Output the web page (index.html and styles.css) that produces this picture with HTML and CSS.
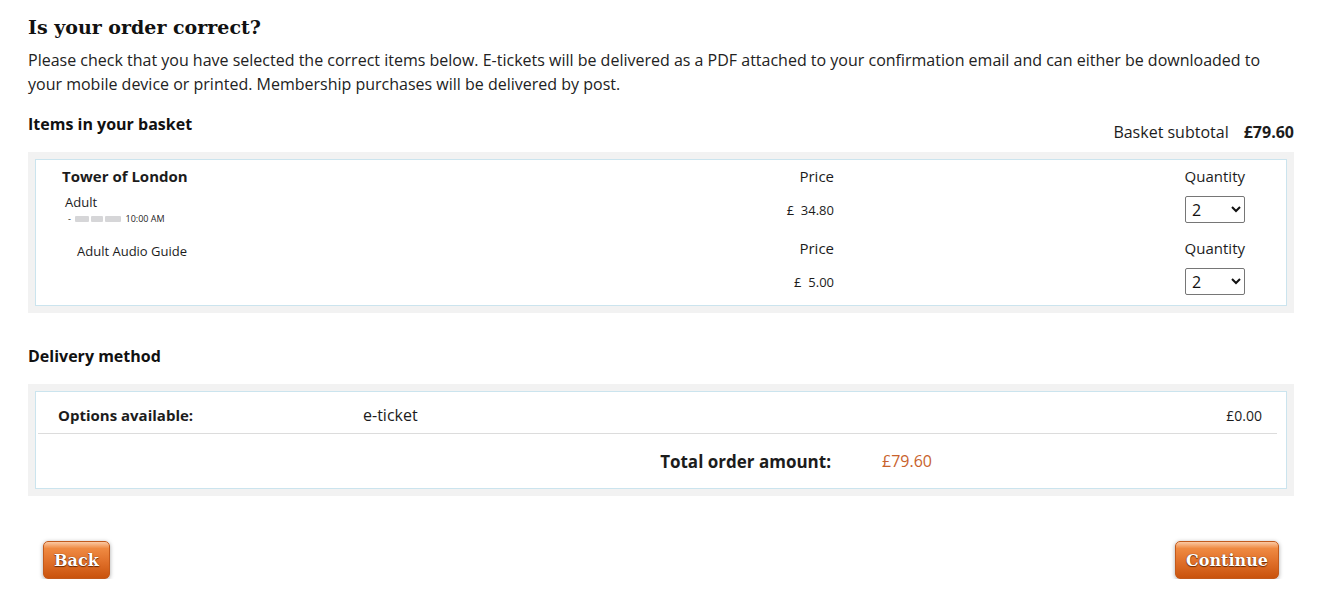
FILE: index.html
```html
<!DOCTYPE html>
<html lang="en">
<head>
<meta charset="utf-8">
<title>Is your order correct?</title>
<link rel="stylesheet" href="styles.css">
</head>
<body>
<div class="page">
  <h1 class="title">Is your order correct?</h1>
  <p class="intro">Please check that you have selected the correct items below. E-tickets will be delivered as a PDF attached to your confirmation email and can either be downloaded to your mobile device or printed. Membership purchases will be delivered by post.</p>

  <div class="basket-head">
    <h2 class="section-title">Items in your basket</h2>
    <div class="subtotal"><span>Basket subtotal</span><strong>£79.60</strong></div>
  </div>

  <div class="panel">
    <div class="panel-inner items">
      <div class="item">
        <div class="item-name">Tower of London</div>
        <div class="col-head price-col">Price</div>
        <div class="col-head qty-col">Quantity</div>
        <div class="item-detail">
          <div class="ticket-type">Adult</div>
          <div class="ticket-date">- <span class="blur b1"></span><span class="blur b2"></span><span class="blur b3"></span> 10:00 AM</div>
        </div>
        <div class="price price-col">£&nbsp; 34.80</div>
        <div class="qty-col"><select class="qty"><option>0</option><option>1</option><option selected>2</option><option>3</option></select></div>
      </div>
      <div class="item second">
        <div class="item-name sub">Adult Audio Guide</div>
        <div class="col-head price-col">Price</div>
        <div class="col-head qty-col">Quantity</div>
        <div class="item-detail"></div>
        <div class="price price-col">£&nbsp; 5.00</div>
        <div class="qty-col"><select class="qty"><option>0</option><option>1</option><option selected>2</option><option>3</option></select></div>
      </div>
    </div>
  </div>

  <h2 class="section-title delivery-title">Delivery method</h2>

  <div class="panel delivery-panel">
    <div class="panel-inner delivery">
      <div class="option-row">
        <div class="opt-label">Options available:</div>
        <div class="opt-name">e-ticket</div>
        <div class="opt-price">£0.00</div>
      </div>
      <div class="sep"></div>
      <div class="total-row">
        <div class="total-label">Total order amount:</div>
        <div class="total-value">£79.60</div>
      </div>
    </div>
  </div>

  <div class="actions">
    <button class="btn btn-back">Back</button>
    <button class="btn btn-continue">Continue</button>
  </div>
</div>
</body>
</html>
```
FILE: styles.css
```css
* { box-sizing: border-box; }
body {
  margin: 0;
  background: #fff;
  color: #1c1c1c;
  font-family: "Open Sans", "Noto Sans", sans-serif;
}
.page {
  padding: 12px 25px 0 28px;
}
.title {
  margin: 0;
  font-family: "DejaVu Serif", serif;
  font-weight: bold;
  font-size: 19px;
  line-height: 30px;
  color: #111;
}
.intro {
  margin: 6px 0 0;
  font-size: 16px;
  line-height: 24px;
  color: #222;
}
.basket-head {
  display: flex;
  justify-content: space-between;
  align-items: flex-start;
  margin-top: 16px;
}
.section-title {
  margin: 0;
  font-size: 16px;
  font-weight: bold;
  line-height: 24px;
  color: #111;
}
.subtotal {
  margin-top: 8px;
  font-size: 16px;
  line-height: 24px;
  display: flex;
  gap: 15px;
}
.subtotal strong { font-weight: bold; }
.panel {
  background: #f2f2f2;
  padding: 7px;
  margin-top: 8px;
}
.panel-inner {
  background: #fff;
  border: 1px solid #cbe4ee;
}
.items {
  padding: 6px 41px 10px 26px;
}
.item {
  display: grid;
  grid-template-columns: 1fr 200px 411px;
  grid-template-rows: 20px 27px;
  row-gap: 10px;
  align-items: center;
}
.item.second { margin-top: 15px; }
.item-name {
  font-size: 15px;
  font-weight: bold;
  line-height: 20px;
}
.item-name.sub {
  font-weight: normal;
  font-size: 13px;
  padding-left: 15px;
  padding-top: 6px;
}
.col-head {
  font-size: 15px;
  line-height: 20px;
}
.price-col { text-align: right; }
.qty-col { text-align: right; }
.item-detail {
  padding-left: 3px;
  align-self: start;
  margin-top: -2px;
}
.ticket-type {
  font-size: 13px;
  line-height: 16px;
}
.ticket-date {
  font-size: 9px;
  line-height: 12px;
  padding-left: 3px;
  margin-top: 3px;
  display: flex;
  align-items: center;
  gap: 2px;
  white-space: pre;
}
.blur {
  display: inline-block;
  height: 6px;
  background: #d6d6d8;
  border-radius: 1px;
}
.b1 { width: 14px; }
.b2 { width: 12px; }
.b3 { width: 16px; }
.price {
  font-size: 13px;
  line-height: 16px;
}
.qty {
  width: 60px;
  height: 27px;
  font-family: "Open Sans", sans-serif;
  font-size: 16px;
  color: #111;
  border: 1px solid #767676;
  border-radius: 2px;
  background: #fff;
  padding: 0 2px;
}
.delivery-title { margin-top: 31px; }
.delivery-panel { margin-top: 16px; }
.option-row {
  display: grid;
  grid-template-columns: 305px 1fr auto;
  align-items: center;
  height: 41px;
  padding: 5px 24px 0 22px;
}
.opt-label {
  font-size: 15px;
  font-weight: bold;
}
.opt-name { font-size: 16px; }
.opt-price { font-size: 14px; }
.sep {
  height: 1px;
  background: #dcdcdc;
  margin: 0 9px 0 2px;
}
.total-row {
  display: grid;
  grid-template-columns: 795px auto;
  column-gap: 51px;
  align-items: center;
  height: 54px;
}
.total-label {
  text-align: right;
  font-size: 17px;
  font-weight: bold;
}
.total-value {
  font-size: 16px;
  color: #c8622c;
}
.actions {
  display: flex;
  justify-content: space-between;
  padding: 0 15px;
  margin-top: 45px;
}
.btn {
  height: 38px;
  padding: 0 10px;
  border: 1px solid #c25a1c;
  border-radius: 5px;
  background: linear-gradient(#fbc9a3 0%, #ef8a42 18%, #e0702a 55%, #c9530d 100%);
  color: #fff;
  font-family: "DejaVu Serif", serif;
  font-weight: bold;
  font-size: 16px;
  text-shadow: 0 1px 1px #6a2a05, 0 0 1px #6a2a05;
  box-shadow: 0 1px 4px rgba(0,0,0,0.35);
  cursor: pointer;
}
```
